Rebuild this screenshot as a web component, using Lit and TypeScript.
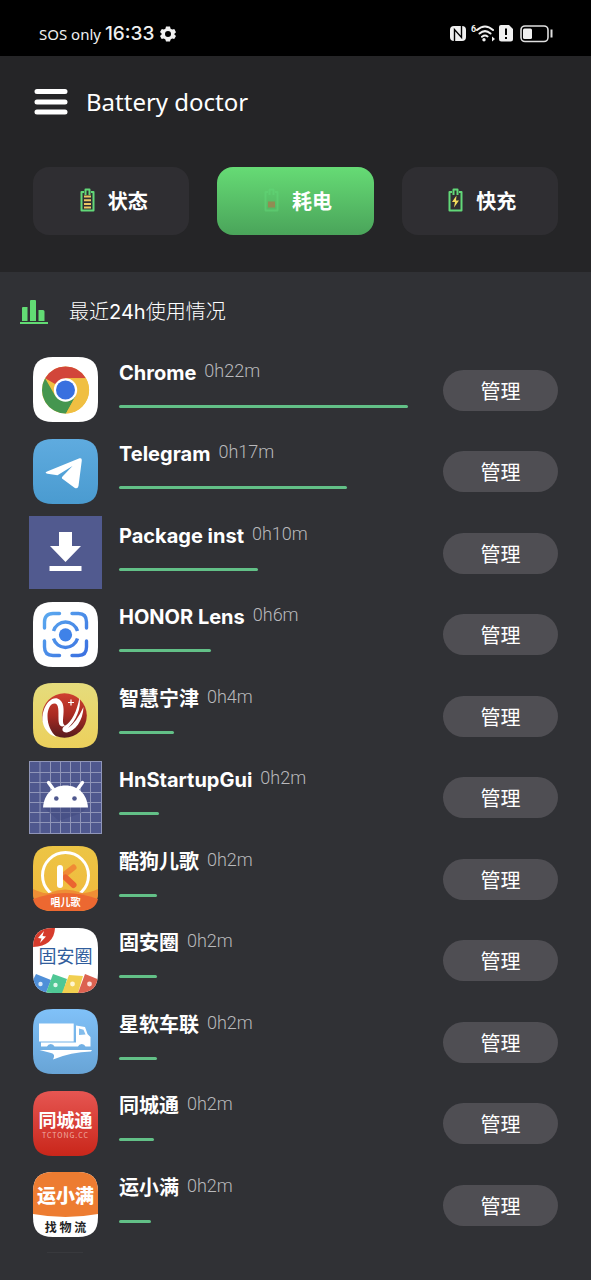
import { LitElement, html, svg, css, type TemplateResult } from "lit";
import { customElement, state } from "lit/decorators.js";

const TILE = "M24 4H49C63 4 69 10 69 24V49C69 63 63 69 49 69H24C10 69 4 63 4 49V24C4 10 10 4 24 4Z";

const art: Record<string, TemplateResult> = {
  chrome: svg`
    <path d=${TILE} fill="#fff"/>
    <circle cx="36.500" cy="37" r="23.500" fill="#f0bf42"/>
    <path d="M36.500 37L16.100 25.300A23.500 23.500 0 0 1 56.900 25.300H36.500Z" fill="#d2463a"/>
    <path d="M16.100 25.300A23.500 23.500 0 0 0 37 60.500L46.700 42.900L36.500 37L26.300 42.900Z" fill="#45964f"/>
    <path d="M57 25.300H36.500L46.700 42.900L37 60.500A23.500 23.500 0 0 0 57 25.300Z" fill="#f0bf42"/>
    <circle cx="36.500" cy="37" r="11.700" fill="#fff"/>
    <circle cx="36.500" cy="37" r="9.500" fill="#3870df"/>`,
  telegram: svg`
    <path d=${TILE} fill="url(#g-telegram)"/>
    <path d="M18 36.500L50.500 23.300Q53 22.500 52.800 25.500L49.500 51Q48.700 54.500 45.500 52.800L33 43.500Q32.500 42.500 33.500 41.500L43.500 31L28.500 40.300L18.500 38.800Q15 37.800 18 36.500Z" fill="#fff"/>`,
  installer: svg`
    <rect width="73" height="73" fill="#515a8f"/>
    <path d="M30 16H43V30H52L36.500 46L21 30H30Z M20.500 50H52.500V55H20.500Z" fill="#fff"/>`,
  lens: svg`
    <path d=${TILE} fill="#fff"/>
    <g fill="none" stroke="url(#g-lens)" stroke-width="3.400" stroke-linecap="round">
      <path d="M30.500 15.500H24Q15.500 15.500 15.500 24V30M43 15.500H49.500Q57.500 15.500 57.500 24V30M15.500 43V49Q15.500 57.500 24 57.500H30.500M57.500 43V49Q57.500 57.500 49.500 57.500H43"/>
      <path d="M24.500 33A12.500 12.500 0 0 1 48.500 33M24.500 40.500A12.500 12.500 0 0 0 48.500 40.500" stroke-linecap="butt"/>
    </g>
    <circle cx="36.500" cy="36.800" r="6.600" fill="#3f82e8"/>`,
  ningjin: svg`
    <path d=${TILE} fill="url(#g-ningjin)"/>
    <circle cx="35.500" cy="36.500" r="22.300" fill="url(#g-ball)"/>
    <path d="M27.500 58C16 55 11 43 14.500 32C18 21 26 16.500 31 21C36 25 34.500 34 34 41C33.800 44 34.500 46 36 46.500C31.500 49 29.500 46 29.500 40C29.500 32 30 24.500 25.500 24.500C21 24.500 18.500 31 18.500 37C18.500 46 22 53 27.500 58Z" fill="#fff"/>
    <path d="M35.500 47C43 43 48 32 50.500 18.500C52.500 29 47 42 39 49Q47 44 54.500 28C54 42 46 52 38 53.500C33 54 32 49.500 35.500 47Z" fill="#fff"/>
    <path d="M42 20.500V26.500M39 23.500H45" stroke="#fff" stroke-width="1.200"/>`,
  android: svg`
    <rect width="73" height="73" fill="#4f588e"/>
    <path d="M11 0V73M21.500 0V73M31.500 0V73M41.500 0V73M51.500 0V73M61.500 0V73M0 11.500H73M0 21.500H73M0 31.500H73M0 41.500H73M0 51.500H73M0 61.500H73M.5 0V73M72.500 0V73M0 .5H73M0 72.500H73" stroke="#8f95b8" stroke-width="1"/>
    <path d="M14 46H59L52 52L30 60Z" fill="#414a80" opacity=".5"/>
    <path d="M19.500 21.500L25 29M53.500 21.500L48 29" stroke="#fff" stroke-width="3.400" stroke-linecap="round"/>
    <path d="M14 46.500C15 33 24 24.500 36.500 24.500S58 33 59 46.500Z" fill="#fff"/>
    <circle cx="27.300" cy="37.500" r="2.300" fill="#4f588e"/><circle cx="45.500" cy="37.500" r="2.300" fill="#4f588e"/>`,
  kugou: svg`
    <path d=${TILE} fill="url(#g-kugou)"/>
    <circle cx="36.500" cy="33.500" r="23" fill="none" stroke="#fff" stroke-width="3"/>
    <path d="M4 47Q14 52 20 51Q36 44 53 51Q61 51 69 47V49C69 63 63 69 49 69H24C10 69 4 63 4 49Z" fill="#ef8e35"/>
    <path d="M4 57Q20 51 36.500 51T69 57C67 65 62 69 49 69H24C11 69 6 65 4 57Z" fill="#ec6831"/>
    <path d="M44.500 25.500L35 33" stroke="#f08a35" stroke-width="6" stroke-linecap="round"/>
    <path d="M36.500 35.500L44.500 43" stroke="#eb6530" stroke-width="6" stroke-linecap="round"/>
    <path d="M31 26V43" stroke="#fff" stroke-width="6" stroke-linecap="round"/>
    <text x="36.500" y="64" class="t-kugou">唱儿歌</text>`,
  guan: svg`
    <clipPath id="c-guan"><path d=${TILE}/></clipPath>
    <g clip-path="url(#c-guan)">
      <rect x="4" y="4" width="65" height="65" fill="#fff"/>
      <path d="M4 4H26Q25 22 4 23Z" fill="#d63c2c"/>
      <path d="M15 7L9 14L12.500 14.500L11 19L17 12.500L13.500 12Z" fill="#fff"/>
      <path d="M7 50L22 56L17 69H4V56Z" fill="#4f8fd8"/>
      <path d="M24 50L38 55L34 69H17Z" fill="#4fc795"/>
      <path d="M40 51L54 52L49 69H33Z" fill="#f1cf50"/>
      <path d="M56 50L71 56L67 69H49Z" fill="#dc6250"/>
      <circle cx="11.500" cy="60" r="2.200" fill="#d8e9fa"/><circle cx="26.500" cy="61" r="2.200" fill="#def7ec"/>
      <circle cx="43.500" cy="60" r="2.400" fill="#fff5d0"/><circle cx="60.500" cy="60" r="2.400" fill="#fae0dc"/>
    </g>
    <text x="36.500" y="39" class="t-guan">固安圈</text>`,
  truck: svg`
    <path d=${TILE} fill="url(#g-truck)"/>
    <path d="M10 18.500H44.700V36.500H10Z M47 20.500L56 22L58.500 29L61.500 32V41.500H56.500A4 4 0 0 0 49 41.500H25.500A4 4 0 0 0 18 41.500H12V37.500H47Z" fill="#fff"/>
    <path d="M50 23.500L54.500 24.800L56.500 29.500L50 30Z" fill="#83bdec"/>
    <path d="M10.500 45H63L62 46.500Q42 47 24 54.500Q27 49 22 48Z" fill="#fff"/>`,
  tctong: svg`
    <path d=${TILE} fill="url(#g-tctong)"/>
    <text x="36.500" y="40" class="t-tctong">同城通</text>
    <text x="36.500" y="51" class="t-tcsmall">TCTONG.CC</text>`,
  yunxiaoman: svg`
    <path d=${TILE} fill="#fff"/>
    <path d="M4 46V24C4 10 10 4 24 4H49C63 4 69 10 69 24V46Q36.500 52 4 46Z" fill="#ed7c31"/>
    <text x="36.500" y="34.500" class="t-yun">运小满</text>
    <text x="36.500" y="64" class="t-wuliu">找 物 流</text>`,
};

const gradients = svg`
  <linearGradient id="g-telegram" x2="0" y2="1"><stop stop-color="#5fabdf"/><stop offset="1" stop-color="#4a9bd0"/></linearGradient>
  <linearGradient id="g-lens" gradientUnits="userSpaceOnUse" x1="16" y1="16" x2="58" y2="58"><stop stop-color="#5aa8ef"/><stop offset="1" stop-color="#3a6fe0"/></linearGradient>
  <linearGradient id="g-ningjin" x2="0" y2="1"><stop stop-color="#e5dc7c"/><stop offset="1" stop-color="#ecd05c"/></linearGradient>
  <linearGradient id="g-ball" x2="0" y2="1"><stop stop-color="#cf4030"/><stop offset=".5" stop-color="#a82a22"/><stop offset="1" stop-color="#561c1e"/></linearGradient>
  <linearGradient id="g-kugou" x2="0" y2="1"><stop stop-color="#ecc545"/><stop offset="1" stop-color="#f2b83c"/></linearGradient>
  <linearGradient id="g-truck" x2="0" y2="1"><stop stop-color="#80c1f8"/><stop offset="1" stop-color="#68a4d6"/></linearGradient>
  <linearGradient id="g-tctong" x2="0" y2="1"><stop stop-color="#e65652"/><stop offset="1" stop-color="#c9261a"/></linearGradient>`;

interface Usage {
  name: string;
  time: string;
  share: number;
  icon: string;
}

const usages: Usage[] = [
  { name: "Chrome", time: "0h22m", share: 100, icon: "chrome" },
  { name: "Telegram", time: "0h17m", share: 79, icon: "telegram" },
  { name: "Package inst", time: "0h10m", share: 48, icon: "installer" },
  { name: "HONOR Lens", time: "0h6m", share: 32, icon: "lens" },
  { name: "智慧宁津", time: "0h4m", share: 19, icon: "ningjin" },
  { name: "HnStartupGui", time: "0h2m", share: 14, icon: "android" },
  { name: "酷狗儿歌", time: "0h2m", share: 13, icon: "kugou" },
  { name: "固安圈", time: "0h2m", share: 13, icon: "guan" },
  { name: "星软车联", time: "0h2m", share: 13, icon: "truck" },
  { name: "同城通", time: "0h2m", share: 12, icon: "tctong" },
  { name: "运小满", time: "0h2m", share: 11, icon: "yunxiaoman" },
];

const shell = svg`<path d="M6 4H3.500V22.500H15.500V4H13M7.500 7V1.500H11.500V7" fill="none" stroke="#62d878" stroke-width="2" stroke-linejoin="round"/>`;

const tabs = [
  {
    id: "status",
    label: "状态",
    icon: svg`${shell}<path d="M6 8.500H13M6 12.300H13M6 16.100H13M6 19.500H13" stroke="#ecc765" stroke-width="2"/>`,
  },
  {
    id: "usage",
    label: "耗电",
    icon: svg`<g opacity=".5">${shell}</g><path d="M6 13.500H13V19.500H6Z" fill="#a0804f" opacity=".8"/>`,
  },
  {
    id: "charge",
    label: "快充",
    icon: svg`${shell}<path d="M10.500 7.500L6 14H9L8 19.500L13 12.500H10Z" fill="#f3dc5c"/>`,
  },
];

@customElement("app-root")
export class AppRoot extends LitElement {
  @state() private active = "usage";

  static styles = css`
    :host {
      display: flex;
      flex-direction: column;
      min-height: 100vh;
      background: #303135;
      color: #fff;
      font-family: Inter, "Noto Sans CJK SC", sans-serif;
    }
    svg { display: block; flex: none; }
    button { border: 0; padding: 0; margin: 0; color: inherit; font: inherit; cursor: pointer; }
    .status-bar {
      display: flex;
      align-items: center;
      justify-content: space-between;
      box-sizing: border-box;
      height: 56px;
      padding: 12px 38px 0 39px;
      background: #000;
      color: #f0f0f0;
    }
    .status-group { display: flex; align-items: center; gap: 4px; }
    .carrier { font-family: "Noto Sans", sans-serif; font-size: 15px; line-height: 20px; }
    .clock { font-size: 19px; line-height: 24px; font-weight: 500; }
    .gear { margin-left: 2px; }
    .top { background: #252527; padding: 24px 33px 37px; }
    .title-row { display: flex; align-items: center; gap: 18px; height: 44px; }
    .menu { background: none; }
    h1 { margin: 0; font-family: "Noto Sans", sans-serif; font-size: 24px; line-height: 44px; font-weight: 400; }
    .tabs { display: grid; grid-template-columns: repeat(3, 1fr); gap: 28px; margin-top: 43px; }
    .tab {
      display: flex;
      align-items: center;
      justify-content: center;
      gap: 12px;
      height: 68px;
      box-sizing: border-box;
      padding: 0 0 2px 3px;
      border-radius: 16px;
      background: #2f2e32;
      font-size: 20px;
      font-weight: 700;
    }
    .tab.active { background: linear-gradient(#66db75, #4aa45a); }
    .section { display: flex; align-items: center; gap: 20px; padding: 25px 20px 22px; }
    h2 { margin: 0; font-size: 20px; line-height: 30px; font-weight: 300; }
    h2 span { font-weight: 400; }
    .list { list-style: none; margin: 0; padding: 0 33px 0 29px; }
    .row { display: grid; grid-template-columns: 73px 1fr 115px; align-items: center; height: 81px; }
    .row:nth-child(even) { height: 82px; }
    .usage { align-self: start; padding: 12px 35px 0 17px; }
    .caption { display: flex; align-items: flex-start; gap: 8px; height: 44px; white-space: nowrap; }
    .name { font-size: 20px; line-height: 24px; font-weight: 700; }
    .time { font-family: Roboto, sans-serif; font-size: 18px; line-height: 20px; font-weight: 300; color: #b9b9bc; }
    .bar { height: 3px; border-radius: 2px; background: #62c087; }
    .manage { height: 41px; margin-top: 1px; border-radius: 21px; background: #4f4e53; font-size: 20px; }
    .end { width: 36px; height: 1px; margin: 7px 0 0 47px; background: #38393d; }
    text { text-anchor: middle; font-family: "Noto Sans CJK SC", sans-serif; fill: #fff; }
    .t-kugou { font-size: 10px; font-weight: 700; }
    .t-guan { font-size: 18px; fill: #315d9c; }
    .t-tctong { font-size: 18px; font-weight: 700; }
    .t-tcsmall { font-size: 7px; letter-spacing: 1px; fill: #f0b0a8; }
    .t-yun { font-size: 19px; font-weight: 900; }
    .t-wuliu { font-size: 12px; font-weight: 700; fill: #222; }
    .t-six { font-family: Roboto, sans-serif; font-size: 9px; font-weight: 700; fill: #f0f0f0; }
  `;

  private statusBar() {
    return html`
      <div class="status-bar">
        <div class="status-group">
          <span class="carrier">SOS only</span>
          <span class="clock">16:33</span>
          <svg class="gear" width="16" height="16" viewBox="0 0 16 16">
            <path d="M6 .5H10L10.600 2.700L12.200 3.600L14.300 3L16 6.200L14.400 7.800V8.600L16 10L14.200 13.100L12.100 12.500L10.600 13.400L10 15.500H6L5.400 13.400L3.800 12.500L1.700 13.100L0 10L1.600 8.500V7.600L0 6.100L1.800 3L3.900 3.600L5.400 2.700ZM8 5A3 3 0 1 0 8 11A3 3 0 0 0 8 5Z" fill="#f0f0f0" fill-rule="evenodd"/>
          </svg>
        </div>
        <svg width="103" height="20" viewBox="0 0 103 20">
          <rect x="0" y="2" width="16" height="15" rx="4" fill="#f0f0f0"/>
          <path d="M4.500 17V5.500L11.500 13.500V2" fill="none" stroke="#000" stroke-width="1.400"/>
          <text x="23.500" y="8" class="t-six">6</text>
          <g fill="none" stroke="#f0f0f0" stroke-width="2" stroke-linecap="round">
            <path d="M27 6Q35 -1 43 6M29.500 9.500Q35 4.700 40.500 9.500M32 12.800Q35 10.500 37.500 12.500"/>
          </g>
          <circle cx="34" cy="15.700" r="1.700" fill="#f0f0f0"/>
          <path d="M42 12.500L45 15L42 17.500Z" fill="#f0f0f0"/>
          <path d="M51 1H59L63 5V15Q63 17.500 60.500 17.500H51.500Q49 17.500 49 15V3Q49 1 51 1Z" fill="#f0f0f0"/>
          <path d="M56 4.500V11M56 13V15" stroke="#000" stroke-width="2"/>
          <rect x="71" y="2" width="27" height="15.500" rx="4" fill="none" stroke="#e0e0e0" stroke-width="1.600"/>
          <rect x="73" y="4.500" width="9" height="10.500" rx="1.500" fill="#f0f0f0"/>
          <path d="M101.500 5.500V13.500" stroke="#e0e0e0" stroke-width="2"/>
        </svg>
      </div>`;
  }

  render() {
    return html`
      ${this.statusBar()}
      <header class="top">
        <div class="title-row">
          <button class="menu" aria-label="Menu">
            <svg width="35" height="28" viewBox="0 0 35 28">
              <path d="M4 3.500H32M4 14H32M4 24H32" stroke="#fff" stroke-width="5" stroke-linecap="round"/>
            </svg>
          </button>
          <h1>Battery doctor</h1>
        </div>
        <nav class="tabs">
          ${tabs.map(
            (t) => html`
              <button class="tab ${t.id === this.active ? "active" : ""}" @click=${() => (this.active = t.id)}>
                <svg width="18" height="25" viewBox="0 0 18 25">${t.icon}</svg>
                <span>${t.label}</span>
              </button>`
          )}
        </nav>
      </header>
      <main>
        <div class="section">
          <svg width="29" height="25" viewBox="0 0 29 25">
            <path d="M2 8Q2 7 3 7H7.500V21H2ZM10 1Q10 0 11 0H15Q16 0 16 1V21H10ZM18.500 10H23Q24.500 10 24.500 11.500V21H18.500Z" fill="#62dc74"/>
            <path d="M0 23H28" stroke="#62dc74" stroke-width="2"/>
          </svg>
          <h2>最近<span>24h</span>使用情况</h2>
        </div>
        <ul class="list">
          ${usages.map(
            (u) => html`
              <li class="row">
                <svg width="73" height="73" viewBox="0 0 73 73"><defs>${gradients}</defs>${art[u.icon]}</svg>
                <div class="usage">
                  <div class="caption"><span class="name">${u.name}</span><span class="time">${u.time}</span></div>
                  <div class="bar" style="width:${u.share}%"></div>
                </div>
                <button class="manage" aria-label="管理 ${u.name}">管理</button>
              </li>`
          )}
        </ul>
        <div class="end"></div>
      </main>`;
  }
}
